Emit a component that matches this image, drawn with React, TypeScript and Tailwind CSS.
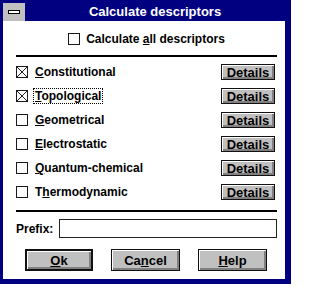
const font = { fontFamily: '"Liberation Sans", Arial, sans-serif' };

const Check = ({ checked }: { checked?: boolean }) => (
  <span className="relative w-[12px] h-[12px] shrink-0 border border-[#1a1a1a] bg-white">
    {checked && (
      <svg className="absolute inset-0" width="10" height="10" viewBox="0 0 10 10">
        <line x1="0" y1="0" x2="10" y2="10" stroke="#1a1a1a" strokeWidth="1" />
        <line x1="10" y1="0" x2="0" y2="10" stroke="#1a1a1a" strokeWidth="1" />
      </svg>
    )}
  </span>
);

const Btn = ({ children, className = "" }: { children: React.ReactNode; className?: string }) => (
  <button
    className={`flex items-center justify-center bg-[#c0c0c0] border border-[#111] shadow-[inset_1px_1px_0_#fff,inset_-2px_-2px_0_#808080] text-[13px] font-bold text-black leading-none ${className}`}
  >
    {children}
  </button>
);

const rows = [
  { pre: "", u: "C", rest: "onstitutional", checked: true },
  { pre: "", u: "T", rest: "opological", checked: true, focus: true },
  { pre: "", u: "G", rest: "eometrical" },
  { pre: "", u: "E", rest: "lectrostatic" },
  { pre: "", u: "Q", rest: "uantum-chemical" },
  { pre: "T", u: "h", rest: "ermodynamic" },
];

export default function App() {
  return (
    <div className="w-[294px] h-[288px] bg-white" style={font}>
      <div className="w-[291px] h-[284px] bg-[#000080] pt-[2px] pl-[3px] pr-[6px] pb-[5px] flex flex-col">
        {/* Title bar */}
        <div className="h-[19px] flex shrink-0">
          <div className="w-[22px] h-[18px] mt-[1px] bg-[#c0c0c0] flex items-center justify-center">
            <span className="w-[12px] h-[4px] bg-white border border-black" />
          </div>
          <div className="flex-1 flex items-center justify-center text-white text-[13px] font-bold leading-none">
            Calculate descriptors
          </div>
        </div>

        {/* Client area */}
        <div className="flex-1 bg-white pl-[13px] pr-[8px] flex flex-col text-black">
          <div className="mt-[11px] h-[14px] flex items-center justify-center gap-[6px] text-[12px] font-bold">
            <Check />
            <span>
              Calculate <u>a</u>ll descriptors
            </span>
          </div>

          <div className="mt-[9px] h-[2px] bg-black" />

          <div className="mt-[3px] flex flex-col">
            {rows.map((r) => (
              <div key={r.rest} className="h-[24px] flex items-center">
                <Check checked={r.checked} />
                <span
                  className={`ml-[5px] text-[12px] font-bold leading-[14px] px-[1px] ${
                    r.focus ? "border border-dotted border-black" : "border border-transparent"
                  }`}
                >
                  {r.pre}
                  <u>{r.u}</u>
                  {r.rest}
                </span>
                <Btn className="ml-auto mr-[2px] w-[54px] h-[16px]">Details</Btn>
              </div>
            ))}
          </div>

          <div className="mt-[6px] h-[2px] bg-black" />

          <div className="mt-[7px] flex items-center">
            <span className="w-[43px] text-[12px] font-bold">Prefix:</span>
            <div className="flex-1 h-[19px] border border-[#222] bg-white" />
          </div>

          <div className="mt-[11px] ml-[9px] flex gap-[18px]">
            <Btn className="w-[68px] h-[22px] border-2">
              <u>O</u>k
            </Btn>
            <Btn className="w-[69px] h-[22px]">
              Ca<u>n</u>cel
            </Btn>
            <Btn className="w-[69px] h-[22px]">
              <u>H</u>elp
            </Btn>
          </div>
        </div>
      </div>
    </div>
  );
}
